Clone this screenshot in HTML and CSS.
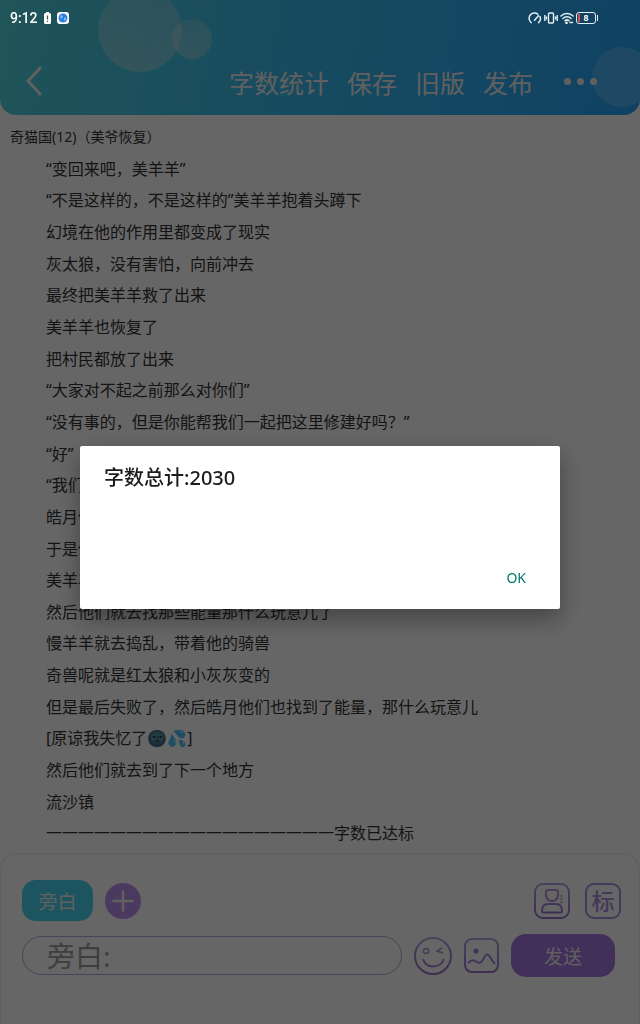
FILE: index.html
```html
<!DOCTYPE html>
<html lang="zh-CN">
<head>
    <meta charset="UTF-8">
    <meta name="viewport" content="width=device-width, initial-scale=1.0">
    <title>字数统计</title>
    <link rel="stylesheet" href="styles.css">
</head>
<body>

    <header class="header">
        <span class="bubble big"></span>
        <span class="bubble small"></span>
        <span class="bubble side"></span>

        <!-- System status bar -->
        <div class="status">
            <span class="time">9:12</span>
            <svg width="7" height="12" viewBox="0 0 7 12"><path d="M2 0h3v1.500H2z" fill="#fff"/><rect y="1" width="7" height="11" rx="1.500" fill="#fff"/><path d="M3.500 3.500v4M3.500 8.700v1.300" stroke="#49535c" stroke-width="1.300"/></svg>
            <svg width="12" height="12" viewBox="0 0 12 12"><rect width="12" height="12" rx="3" fill="#fff"/><circle cx="6" cy="6" r="4.500" fill="#2b7de0"/><path d="M3 4l2-1 1 2-2 2zM7 6l2-1v3l-2 1z" fill="#7db8f5"/></svg>
            <div class="signals">
                <svg width="14" height="12" viewBox="0 0 14 12" fill="none" stroke="#e4f0f6" stroke-width="1.500" stroke-linecap="round"><path d="M3.200 10.600A5.300 5.300 0 0 1 9.800 2.100M12 4.600a5.300 5.300 0 0 1-1.400 6M6.500 8.200l4-4.400"/></svg>
                <svg width="14" height="12" viewBox="0 0 14 12" fill="none" stroke="#e4f0f6" stroke-width="1.400"><rect x="4.500" y="1" width="5" height="10" rx="1"/><path d="M.8 3v6M13.200 3v6M2.500 4.500v3M11.500 4.500v3"/></svg>
                <svg width="14" height="12" viewBox="0 0 14 12" fill="none" stroke="#e4f0f6" stroke-width="1.500" stroke-linecap="round"><path d="M1 4a8.500 8.500 0 0 1 12 0M3 6.500a5.700 5.700 0 0 1 8 0M5 8.800a3 3 0 0 1 4 0"/><circle cx="6.500" cy="10.800" r=".6"/><path d="M10 10.500h2.500"/></svg>
                <span class="battery">8</span>
            </div>
        </div>

        <div class="toolbar">
            <button class="back" aria-label="返回">
                <svg width="16" height="30" viewBox="0 0 16 30" fill="none" stroke="#f0f0f0" stroke-width="3"><path d="M15 1L2 15l13 14"/></svg>
            </button>
            <nav class="actions">
                <button>字数统计</button>
                <button>保存</button>
                <button>旧版</button>
                <button>发布</button>
            </nav>
            <button class="more" aria-label="更多"><i></i><i></i><i></i></button>
        </div>
    </header>

    <main class="story">
        <h1>奇猫国(12)（美爷恢复）</h1>
        <div class="lines">
            <p>“变回来吧，美羊羊”</p>
            <p>“不是这样的，不是这样的”美羊羊抱着头蹲下</p>
            <p>幻境在他的作用里都变成了现实</p>
            <p>灰太狼，没有害怕，向前冲去</p>
            <p>最终把美羊羊救了出来</p>
            <p>美羊羊也恢复了</p>
            <p>把村民都放了出来</p>
            <p>“大家对不起之前那么对你们”</p>
            <p>“没有事的，但是你能帮我们一起把这里修建好吗？”</p>
            <p>“好”</p>
            <p>“我们</p>
            <p>皓月他</p>
            <p>于是他</p>
            <p>美羊羊</p>
            <p>然后他们就去找那些能量那什么玩意儿了</p>
            <p>慢羊羊就去捣乱，带着他的骑兽</p>
            <p>奇兽呢就是红太狼和小灰灰变的</p>
            <p>但是最后失败了，然后皓月他们也找到了能量，那什么玩意儿</p>
            <p>[原谅我失忆了🌚💦]</p>
            <p>然后他们就去到了下一个地方</p>
            <p>流沙镇</p>
            <p>一一一一一一一一一一一一一一一一一一字数已达标</p>
        </div>
    </main>

    <footer class="composer">
        <div class="row tools">
            <button class="role">旁白</button>
            <button class="add" aria-label="添加">
                <svg width="22" height="22" viewBox="0 0 22 22" stroke="#f0f0f0" stroke-width="2.500" stroke-linecap="round"><path d="M11 1.500v19M1.500 11h19"/></svg>
            </button>
            <button class="icon push" aria-label="角色">
                <svg width="36" height="36" viewBox="0 0 36 36" fill="none" stroke="url(#violet)" stroke-width="2"><rect x="1" y="1" width="34" height="34" rx="8"/><path d="M14 7h8q2.500 0 2 2.500v2.500q-.5 6-6 6t-6-6v-2q0-3 2-3zM9.500 29.500q-1.500 0-1.500-2 0-6.500 6-6.500h8q6 0 6 6.500 0 2-1.500 2z"/><path d="M26 13h3M25.500 16h3.500M26 19h3" stroke-width="1"/></svg>
            </button>
            <button class="icon mark">标</button>
        </div>
        <div class="row">
            <input class="message" type="text" placeholder="旁白:" aria-label="旁白">
            <button class="icon" aria-label="表情">
                <svg width="38" height="38" viewBox="0 0 38 38" fill="none" stroke="url(#violet)" stroke-width="2"><circle cx="19" cy="19" r="18"/><circle cx="12" cy="14" r="2.500" stroke-width="1.500"/><path d="M28 11l-5 3 6 2" stroke-width="1.500"/><path d="M9 22c3 10 17 10 21 0"/></svg>
            </button>
            <button class="icon" aria-label="图片">
                <svg width="35" height="35" viewBox="0 0 35 35" fill="none" stroke="url(#violet)" stroke-width="2"><rect x="1" y="1" width="33" height="33" rx="7"/><circle cx="12" cy="13" r="2.500" fill="#a37be8" stroke="none"/><path d="M4 25c4-4 6-3 9-1s5 0 7-4 4-5 6-1 2 4 5 7"/></svg>
            </button>
            <button class="send">发送</button>
        </div>
    </footer>

    <!-- Shared stroke gradient for the outlined icons -->
    <svg class="defs" width="0" height="0">
        <linearGradient id="violet" gradientUnits="userSpaceOnUse" x1="0" y1="0" x2="0" y2="36">
            <stop offset="0" stop-color="#b8a3e0"/>
            <stop offset="1" stop-color="#9670cc"/>
        </linearGradient>
    </svg>

    <!-- Word count dialog -->
    <div class="overlay">
        <div class="dialog" role="dialog" aria-labelledby="count">
            <h2 id="count">字数总计:2030</h2>
            <button class="ok">OK</button>
        </div>
    </div>

</body>
</html>
```
FILE: styles.css
```css
* {
    box-sizing: border-box;
}

body {
    margin: 0;
    min-height: 100vh;
    display: flex;
    flex-direction: column;
    background: #fff;
    color: #333;
    font-family: "Noto Sans", "Noto Sans CJK SC", sans-serif;
}

button {
    padding: 0;
    border: none;
    background: none;
    color: #f0f0f0;
    font-family: inherit;
    cursor: pointer;
}

svg {
    display: block;
}

.defs {
    position: absolute;
}

/* Header */
.header {
    position: relative;
    height: 115px;
    overflow: hidden;
    border-radius: 0 0 16px 16px;
    background: linear-gradient(100deg, #50d2dc, #3abcee 45%, #28a4f8);
}

.bubble {
    position: absolute;
    border-radius: 50%;
    background: linear-gradient(rgba(255, 235, 225, 0.2), rgba(255, 235, 225, 0.32));
}

.big {
    width: 84px;
    height: 84px;
    left: 98px;
    top: -12px;
}

.small {
    width: 40px;
    height: 40px;
    left: 172px;
    top: 19px;
}

.side {
    width: 60px;
    height: 60px;
    right: -12px;
    top: 47px;
    background: rgba(255, 255, 255, 0.16);
}

/* The status bar stays bright above the overlay */
.status {
    position: relative;
    z-index: 20;
    display: flex;
    align-items: center;
    gap: 6px;
    height: 36px;
    padding: 0 42px 0 10px;
    color: #fff;
}

.time {
    font-family: Roboto, sans-serif;
    font-size: 14px;
    font-weight: 500;
}

.signals {
    display: flex;
    align-items: center;
    gap: 2px;
    margin-left: auto;
}

.battery {
    position: relative;
    width: 20px;
    height: 12px;
    margin-right: 2px;
    border: 1px solid #e4f0f6;
    border-radius: 3px;
    background: linear-gradient(#e05050, #e05050) 1px 1px / 2px 8px no-repeat;
    font-size: 9px;
    font-weight: 700;
    line-height: 10px;
    text-align: center;
}

.battery::after {
    content: "";
    position: absolute;
    right: -3px;
    top: 2px;
    width: 1px;
    height: 6px;
    background: #e4f0f6;
}

.toolbar {
    position: relative;
    display: flex;
    align-items: center;
    height: 90px;
    padding: 0 43px 0 26px;
}

.actions {
    display: flex;
    gap: 18px;
    margin-left: auto;
    padding-top: 4px;
}

.actions button {
    font-size: 25px;
    line-height: 36px;
}

.more {
    display: flex;
    gap: 6px;
    margin-left: 31px;
}

.more i {
    width: 7px;
    height: 7px;
    border-radius: 50%;
    background: #f0f0f0;
}

/* Story text */
.story {
    flex: 1;
    display: flex;
    flex-direction: column;
    padding: 10px 10px 4px;
}

.story h1 {
    margin: 0 0 4px;
    font-size: 14px;
    font-weight: 400;
    line-height: 24px;
}

.lines {
    flex: 1;
    display: flex;
    flex-direction: column;
    padding-left: 36px;
}

.lines p {
    flex: 1;
    display: flex;
    align-items: center;
    margin: 0;
    font-size: 16px;
    line-height: 24px;
}

/* Bottom composer */
.composer {
    display: flex;
    flex-direction: column;
    gap: 13px;
    height: 171px;
    padding: 26px 18px 0 21px;
    border: 1px solid #e8e8ee;
    border-bottom: none;
    border-radius: 18px 18px 0 0;
}

.row {
    display: flex;
    align-items: center;
    gap: 12px;
    padding-right: 6px;
}

.tools {
    padding-right: 0;
}

.role {
    width: 71px;
    height: 41px;
    border-radius: 14px;
    background: #46d4f0;
    font-size: 19px;
}

.add {
    display: grid;
    place-items: center;
    width: 36px;
    height: 36px;
    border-radius: 50%;
    background: #bd8ff0;
}

.push {
    margin-left: auto;
}

.mark {
    width: 36px;
    height: 36px;
    margin-left: 3px;
    border: 2px solid #a88fdc;
    border-radius: 9px;
    color: #a88fdc;
    font-size: 23px;
    font-weight: 500;
    line-height: 32px;
}

.message {
    flex: 1;
    min-width: 0;
    height: 39px;
    padding: 0 24px;
    border: 1px solid #b3a8d4;
    border-radius: 20px;
    background: #fff;
    font-family: inherit;
    font-size: 28px;
}

.message::placeholder {
    color: #9c9c9c;
}

.send {
    width: 104px;
    height: 43px;
    border-radius: 15px;
    background: #a676e0;
    font-size: 19px;
}

/* Dialog */
.overlay {
    position: fixed;
    inset: 0;
    z-index: 10;
    display: flex;
    align-items: center;
    justify-content: center;
    padding-top: 31px;
    background: rgba(0, 0, 0, 0.6);
}

.dialog {
    display: flex;
    flex-direction: column;
    justify-content: space-between;
    width: 75%;
    min-height: 163px;
    padding: 18px 34px 22px 24px;
    border-radius: 2px;
    background: #fff;
    box-shadow: 0 10px 24px rgba(0, 0, 0, 0.35);
}

.dialog h2 {
    margin: 0;
    color: #1c1c1c;
    font-size: 20px;
    font-weight: 500;
    line-height: 28px;
}

.ok {
    align-self: flex-end;
    color: #00796b;
    font-size: 14px;
    line-height: 18px;
}
```
